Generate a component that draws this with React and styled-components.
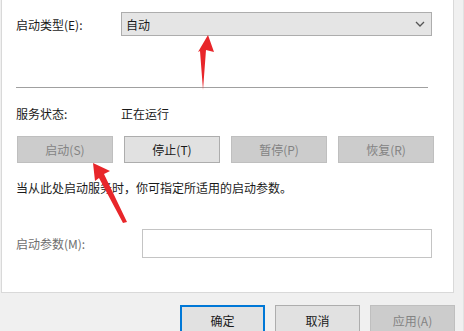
import React from 'react'
import styled, { createGlobalStyle } from 'styled-components'

const Global = createGlobalStyle`
  html, body {
    margin: 0;
    padding: 0;
    background: #f0f0f0;
  }
  body {
    font-family: "Microsoft YaHei", "Noto Sans CJK SC", "Noto Sans", sans-serif;
    font-size: 12px;
    color: #1a1a1a;
  }
`

const Window = styled.div`
  position: relative;
  width: 464px;
  height: 331px;
  overflow: hidden;
  background: #f0f0f0;
  border-right: 1px solid #e2e2e2;
  box-sizing: border-box;
`

const Panel = styled.div`
  margin-left: 1px;
  width: 453px;
  height: 293px;
  box-sizing: border-box;
  background: #fff;
  border-left: 1px solid #d9d9d9;
  border-right: 1px solid #d9d9d9;
  border-bottom: 1px solid #d9d9d9;
  padding: 12px 0 0 14px;
  display: flex;
  flex-direction: column;
`

const Row = styled.div`
  display: flex;
  align-items: center;
  height: ${p => p.$h || 24}px;
  margin-top: ${p => p.$mt || 0}px;
`

const Label = styled.div`
  width: ${p => p.$w || 105}px;
  color: ${p => (p.$disabled ? '#6e6e6e' : '#1a1a1a')};
  white-space: nowrap;
`

const Combo = styled.div`
  width: 311px;
  height: 24px;
  box-sizing: border-box;
  background: #e5e5e5;
  border: 1px solid #adadad;
  display: flex;
  align-items: center;
  justify-content: space-between;
  padding: 0 6px 0 4px;
`

const Divider = styled.div`
  width: 412px;
  height: 1px;
  background: #a0a0a0;
  margin-top: 51px;
`

const ButtonGrid = styled.div`
  display: grid;
  grid-template-columns: repeat(4, 96px);
  column-gap: 11px;
  margin-top: 11px;
  padding-left: 1px;
`

const Btn = styled.div`
  height: 27px;
  box-sizing: border-box;
  display: flex;
  align-items: center;
  justify-content: center;
  background: ${p => (p.$disabled ? '#cccccc' : '#e1e1e1')};
  border: ${p => (p.$primary ? '2px solid #0078d7' : p.$disabled ? '1px solid #bfbfbf' : '1px solid #adadad')};
  color: ${p => (p.$disabled ? '#838383' : '#1a1a1a')};
`

const Note = styled.div`
  margin-top: 16px;
  height: 18px;
  line-height: 18px;
`

const Input = styled.div`
  width: 290px;
  height: 29px;
  box-sizing: border-box;
  border: 1px solid #c4c4c4;
  background: #fff;
`

const Footer = styled.div`
  display: flex;
  justify-content: flex-end;
  gap: 10px;
  padding: 12px 8px 0 0;
`

const FootBtn = styled(Btn)`
  width: 85px;
  height: 30px;
`

const Overlay = styled.svg`
  position: absolute;
  left: 0;
  top: 0;
  pointer-events: none;
`

function Chevron() {
  return (
    <svg width="10" height="6" viewBox="0 0 10 6">
      <path d="M1 1 L5 5 L9 1" fill="none" stroke="#555" strokeWidth="1.3" />
    </svg>
  )
}

function App() {
  return (
    <>
      <Global />
      <Window>
        <Panel>
          <Row>
            <Label>启动类型(E):</Label>
            <Combo>
              <span>自动</span>
              <Chevron />
            </Combo>
          </Row>
          <Divider />
          <Row $mt={13}>
            <Label>服务状态:</Label>
            <span>正在运行</span>
          </Row>
          <ButtonGrid>
            <Btn $disabled>启动(S)</Btn>
            <Btn>停止(T)</Btn>
            <Btn $disabled>暂停(P)</Btn>
            <Btn $disabled>恢复(R)</Btn>
          </ButtonGrid>
          <Note>当从此处启动服务时，你可指定所适用的启动参数。</Note>
          <Row $h={29} $mt={32}>
            <Label $w={126} $disabled>启动参数(M):</Label>
            <Input />
          </Row>
        </Panel>
        <Footer>
          <FootBtn $primary>确定</FootBtn>
          <FootBtn>取消</FootBtn>
          <FootBtn $disabled>应用(A)</FootBtn>
        </Footer>
        <Overlay width="464" height="331">
          <polygon points="208,35 214,52 206,50 203,90 200,51 198,52" fill="#e8262a" />
          <polygon points="93,163 110,171 104,174 127,222 123,223 99,178 95,181" fill="#e8262a" />
        </Overlay>
      </Window>
    </>
  )
}

export default App
